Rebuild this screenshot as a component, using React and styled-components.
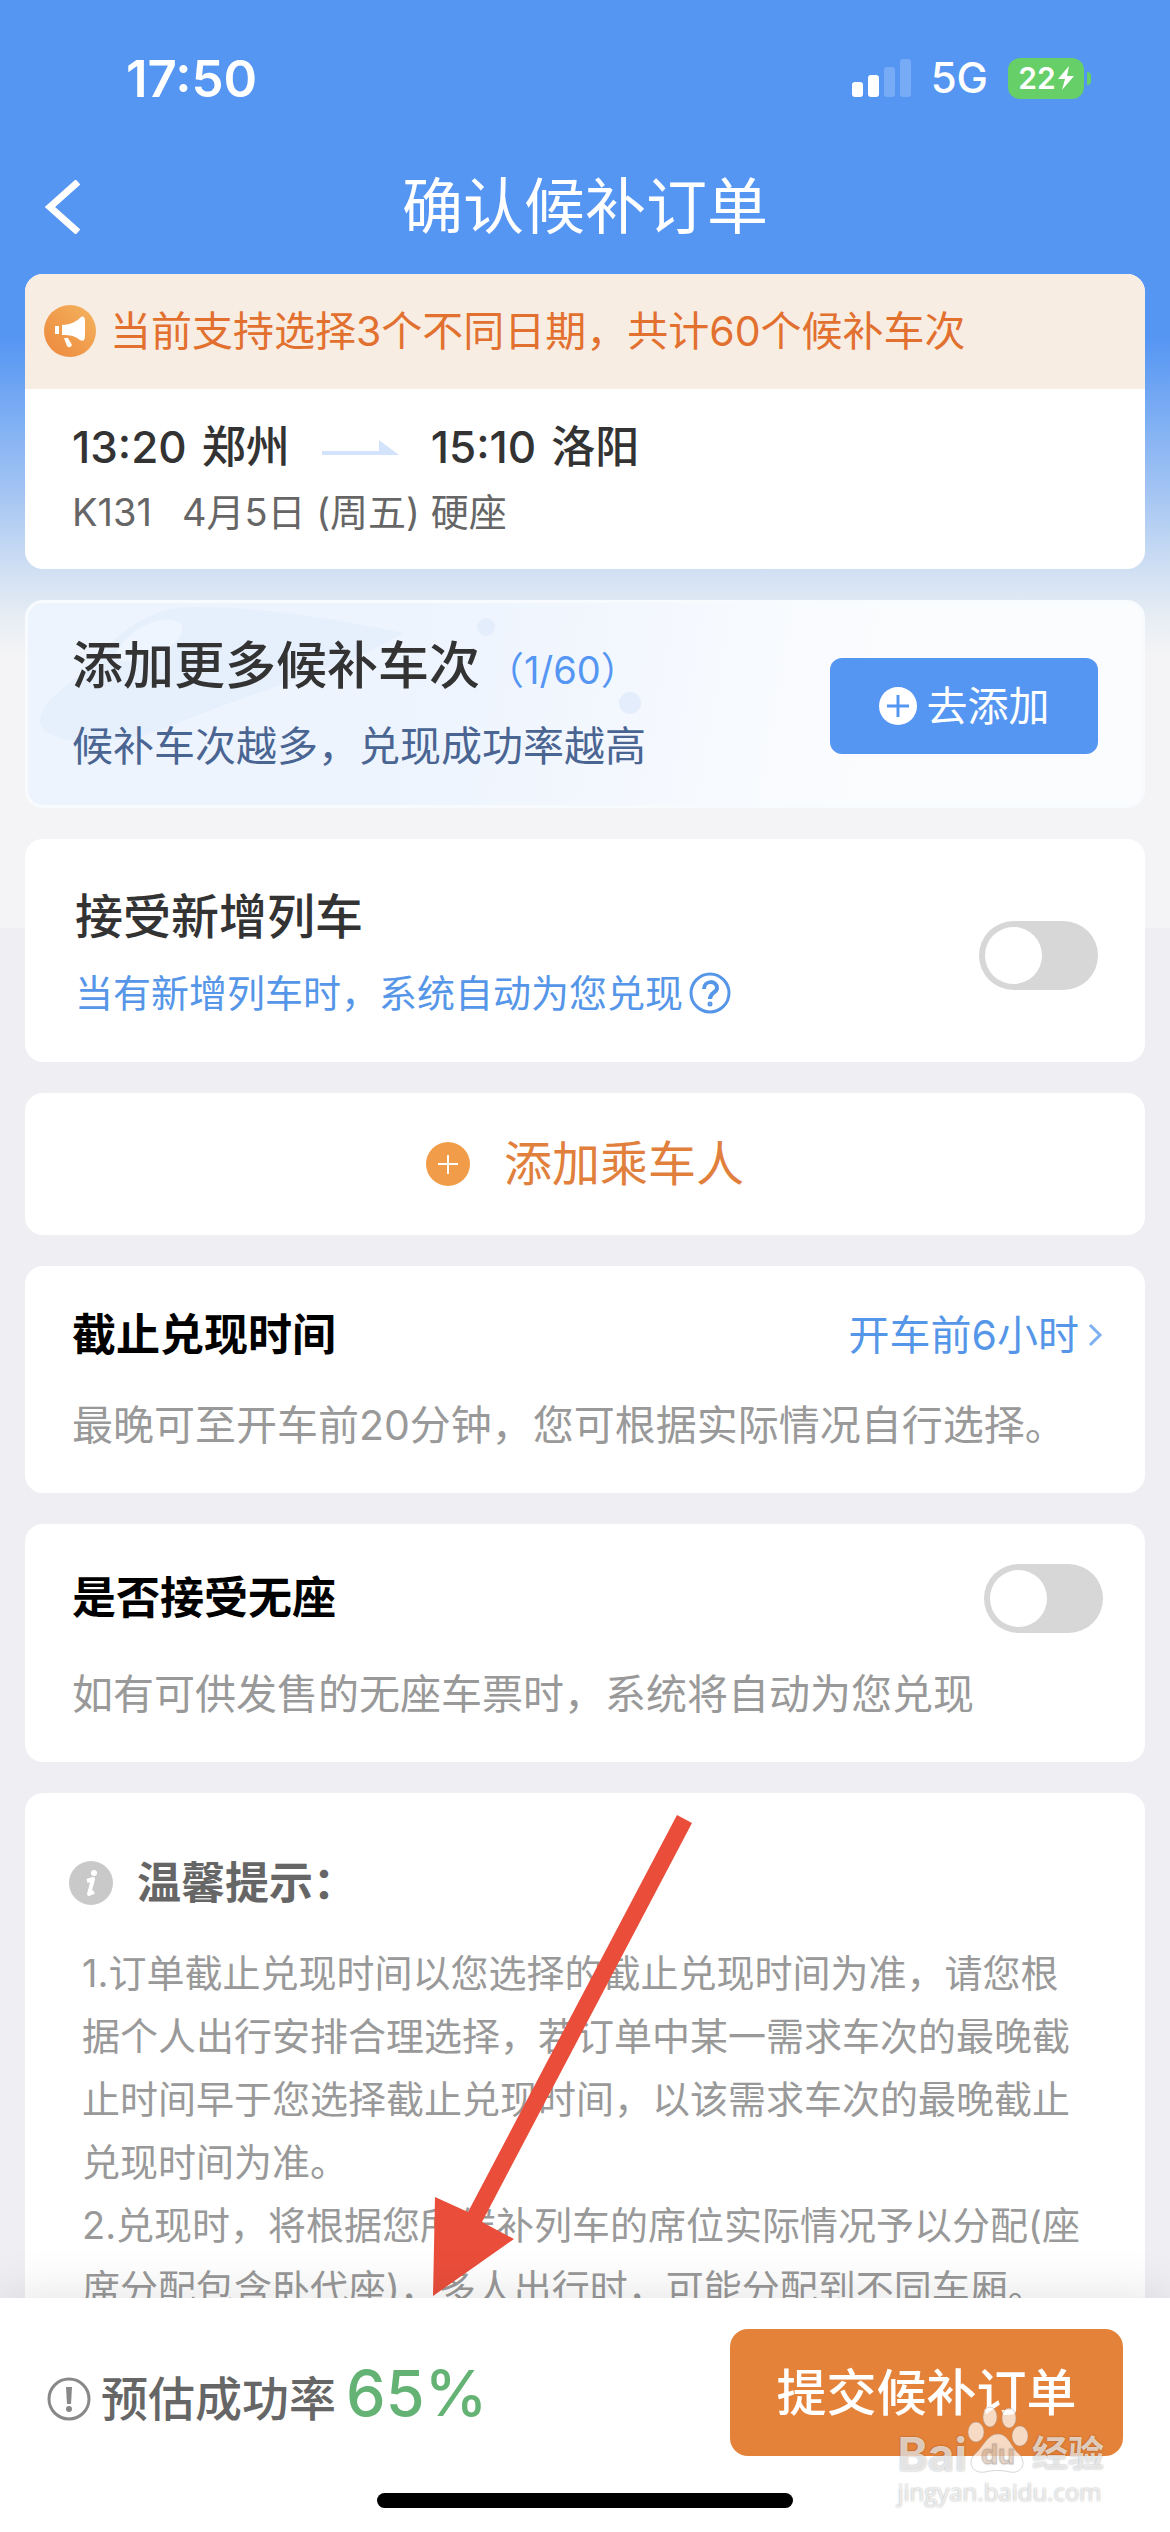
import React, { useState } from 'react';
import styled, { createGlobalStyle } from 'styled-components';

const GlobalStyle = createGlobalStyle`
  * {
    box-sizing: border-box;
  }

  body {
    margin: 0;
    font-family: Inter, "Noto Sans CJK SC", sans-serif;
    line-height: 1;
    color: #333;
  }

  h1, h2, p {
    margin: 0;
    font-weight: 400;
  }

  button {
    font-family: inherit;
    line-height: inherit;
    border: none;
    padding: 0;
    background: none;
    cursor: pointer;
  }

  svg {
    display: block;
    flex-shrink: 0;
  }
`;

const Page = styled.div`
  display: flex;
  flex-direction: column;
  height: 100vh;
  background: #eeeef3 linear-gradient(
    #5696f3 340px, #a7c7f3 500px, #cfdff3 568px, #e8eef4 620px, #f4f4f6 655px
  ) no-repeat top / 100% 928px;
`;

const StatusBar = styled.div`
  display: flex;
  align-items: center;
  justify-content: space-between;
  height: 156px;
  flex-shrink: 0;
  padding: 0 79px 0 126px;
  color: #fff;
`;

const Clock = styled.span`
  font-size: 51px;
  font-weight: 600;
`;

const StatusIcons = styled.div`
  display: flex;
  align-items: center;
  gap: 20px;
  font-size: 42px;
  font-weight: 500;
`;

const Battery = styled.div`
  position: relative;
  display: flex;
  align-items: center;
  justify-content: center;
  gap: 2px;
  width: 76px;
  height: 41px;
  margin-right: 7px;
  border-radius: 12px;
  background: #66cf67;
  font-size: 30px;
  font-weight: 600;

  &::after {
    content: '';
    position: absolute;
    right: -7px;
    width: 4px;
    height: 13px;
    border-radius: 0 4px 4px 0;
    background: #66cf67;
  }
`;

const NavBar = styled.header`
  display: grid;
  grid-template-columns: 80px 1fr 80px;
  align-items: center;
  height: 102px;
  flex-shrink: 0;
  margin-bottom: 16px;
  padding: 0 44px;
  color: #fff;
`;

const NavTitle = styled.h1`
  font-size: 61px;
  text-align: center;
`;

const Content = styled.main`
  position: relative;
  display: flex;
  flex-direction: column;
  gap: 31px;
  flex: 1;
  min-height: 0;
  overflow: hidden;
  padding: 0 25px;
`;

const Card = styled.section`
  position: relative;
  flex-shrink: 0;
  overflow: hidden;
  border-radius: 18px;
  background: #fff;
  padding: ${props => props.$pad || '0'};
`;

const Notice = styled.div`
  display: flex;
  align-items: center;
  gap: 13px;
  height: 115px;
  padding-left: 19px;
  background: #f8ede3;
  color: #e2702f;
  font-size: 41px;
`;

const Trip = styled.div`
  padding: 26px 47px 24px;
`;

const Route = styled.div`
  display: flex;
  align-items: center;
  gap: 32px;
  font-size: 44px;
  font-weight: 500;
  line-height: 65px;
`;

const Stop = styled.span`
  display: flex;
  gap: 15px;
`;

const TrainInfo = styled.p`
  display: flex;
  gap: 30px;
  font-size: 38px;
  line-height: 65px;
  color: #666;
`;

const SplitRow = styled.div`
  position: relative;
  display: flex;
  align-items: center;
  justify-content: space-between;
`;

const CardTitle = styled.h2`
  font-size: ${props => props.$size || '44px'};
  font-weight: ${props => props.$weight || 500};
  line-height: ${props => props.$line};
  color: ${props => props.$color || '#333'};
`;

const CardText = styled.p`
  display: flex;
  align-items: center;
  gap: 6px;
  font-size: ${props => props.$size || '41px'};
  line-height: ${props => props.$line};
  color: ${props => props.$color || '#999'};
`;

const Count = styled.span`
  margin-left: 6px;
  font-size: 38px;
  font-weight: 400;
  line-height: 1;
  color: #5696f3;
`;

const MoreCard = styled(Card)`
  background: linear-gradient(100deg, #edf4fe 35%, #fbfcfe 75%);
  border: 3px solid #f8fbfe;
`;

const TrainArt = styled.svg`
  position: absolute;
  left: 0;
  top: 0;
`;

const AddButton = styled.button`
  display: flex;
  align-items: center;
  justify-content: center;
  gap: 10px;
  width: 268px;
  height: 96px;
  border-radius: 12px;
  background: #5696f3;
  color: #fff;
  font-size: 41px;
`;

const PassengerButton = styled.button`
  display: flex;
  align-items: center;
  justify-content: center;
  gap: 34px;
  width: 100%;
  height: 142px;
  color: #e1803d;
  font-size: 48px;
`;

const LinkButton = styled.button`
  display: flex;
  align-items: center;
  gap: 9px;
  color: #5696e8;
  font-size: 41px;
`;

const Toggle = styled.input`
  appearance: none;
  width: 119px;
  height: 69px;
  margin: 0;
  padding: 6px;
  border-radius: 35px;
  background: ${props => (props.checked ? '#5696f3' : '#d7d7d7')};
  cursor: pointer;

  &::before {
    content: '';
    display: block;
    width: 57px;
    height: 57px;
    margin-left: ${props => (props.checked ? '50px' : '0')};
    border-radius: 50%;
    background: #fff;
  }
`;

const TipsHead = styled.div`
  display: flex;
  align-items: center;
  gap: 24px;
  padding-left: 44px;
  margin-bottom: 20px;
`;

const TipsText = styled.p`
  padding: 0 58px 0 57px;
  font-size: 38px;
  line-height: 63px;
  color: #999;
`;

const Pointer = styled.svg`
  position: absolute;
  left: 408px;
  top: 22px;
`;

const Footer = styled.footer`
  position: relative;
  flex-shrink: 0;
  padding: 31px 47px 24px;
  background: #fff;
  box-shadow: 0 0 50px rgba(0, 0, 0, 0.12);
`;

const Rate = styled.div`
  display: flex;
  align-items: center;
  gap: 10px;
  padding-top: 12px;
  font-size: 47px;
  font-weight: 500;
  color: #666;
`;

const Percent = styled.strong`
  font-size: 63px;
  font-weight: 500;
  line-height: 80px;
  margin-bottom: 12px;
  color: #64b374;
`;

const SubmitButton = styled.button`
  width: 393px;
  height: 127px;
  border-radius: 18px;
  background: #e58239;
  color: #fff;
  font-size: 50px;
  font-weight: 500;
`;

const HomeBar = styled.div`
  width: 416px;
  height: 15px;
  margin: 37px auto 0;
  border-radius: 8px;
  background: #000;
`;

const Watermark = styled.div`
  position: absolute;
  right: 66px;
  bottom: 22px;
  display: flex;
  flex-direction: column;
  color: rgba(255, 255, 255, 0.7);
  text-shadow: 0 0 2px rgba(0, 0, 0, 0.35);
  pointer-events: none;
`;

const WatermarkLogo = styled.div`
  display: flex;
  align-items: flex-end;
  font-size: 46px;
  font-weight: 700;
  line-height: 40px;
`;

const WatermarkCn = styled.span`
  margin-left: 3px;
  font-size: 36px;
`;

const WatermarkUrl = styled.span`
  font-family: "Open Sans", sans-serif;
  font-size: 24px;
  line-height: 36px;
`;

const SignalIcon = () => (
  <svg width="59" height="38" viewBox="0 0 59 38" fill="#fff">
    <rect x="0" y="23" width="11" height="15" rx="3" />
    <rect x="16" y="16" width="11" height="22" rx="3" />
    <rect x="32" y="8" width="11" height="30" rx="3" opacity="0.2" />
    <rect x="48" y="0" width="11" height="38" rx="3" opacity="0.2" />
  </svg>
);

const BoltIcon = () => (
  <svg width="16" height="24" viewBox="0 0 16 24" fill="#fff">
    <path d="M11 0 L0 13 H7 L4 24 L16 10 H9 Z" />
  </svg>
);

const BackIcon = () => (
  <svg width="38" height="54" viewBox="0 0 38 54" fill="none" stroke="#fff" strokeWidth="7">
    <path d="M34 2 L6 27 L34 52" />
  </svg>
);

const HornIcon = () => (
  <svg width="53" height="53" viewBox="0 0 53 53">
    <defs>
      <linearGradient id="horn" x1="1" y1="0" x2="0" y2="1">
        <stop offset="0" stopColor="#f5b45f" />
        <stop offset="1" stopColor="#ec873c" />
      </linearGradient>
    </defs>
    <circle cx="26" cy="26" r="26" fill="url(#horn)" />
    <path d="M18 20 C27 20 33 16 37 12 Q41 10 41 17 V30 Q41 38 36 35 C31 31 27 30 18 30 Z" fill="#fff" />
    <path d="M11 21 H15 V29 H11 Z M20 33 L24 33 L28 40 Q26 44 23 41 Z" fill="#fff" />
  </svg>
);

const RouteArrow = () => (
  <svg width="77" height="16" viewBox="0 0 77 16" fill="#d3e3fb">
    <path d="M0 11 H57 V0 L77 15 H0 Z" />
  </svg>
);

const AddIcon = () => (
  <svg width="38" height="38" viewBox="0 0 38 38">
    <circle cx="19" cy="19" r="19" fill="#fff" />
    <path d="M19 8 V30 M8 19 H30" stroke="#5696f3" strokeWidth="3" />
  </svg>
);

const PassengerIcon = () => (
  <svg width="44" height="44" viewBox="0 0 44 44">
    <circle cx="22" cy="22" r="22" fill="#f09c49" />
    <path d="M22 13 V32 M12 22 H32" stroke="#fff" strokeWidth="2" />
  </svg>
);

const HelpIcon = () => (
  <svg width="42" height="42" viewBox="0 0 42 42" fill="none" stroke="#5696e8" strokeWidth="3">
    <circle cx="21" cy="21" r="19" />
    <path d="M15 17 C15 8 28 8 28 16 C28 21 21 20 21 27" strokeWidth="4" />
    <circle cx="21" cy="32" r="1" strokeWidth="3" />
  </svg>
);

const ChevronIcon = () => (
  <svg width="15" height="24" viewBox="0 0 15 24" fill="none" stroke="#7fb0ef" strokeWidth="3">
    <path d="M2 2 L12 12 L2 22" />
  </svg>
);

const InfoIcon = () => (
  <svg width="44" height="44" viewBox="0 0 44 44">
    <circle cx="22" cy="22" r="22" fill="#c9c9c9" />
    <circle cx="25" cy="12" r="3" fill="#fff" />
    <path d="M18 20 L24 18 L20 33 L25 31" fill="none" stroke="#fff" strokeWidth="4" strokeLinejoin="round" />
  </svg>
);

const AlertIcon = () => (
  <svg width="44" height="44" viewBox="0 0 44 44">
    <circle cx="22" cy="22" r="20" fill="none" stroke="#888" strokeWidth="3" />
    <path d="M19 10 H25 L24 27 H20 Z" fill="#888" />
    <circle cx="22" cy="32" r="3" fill="#888" />
  </svg>
);

const PawIcon = () => (
  <svg width="62" height="68" viewBox="0 0 62 68" fill="#fff" fillOpacity="0.7" stroke="#999" strokeOpacity="0.4">
    <ellipse cx="9" cy="26" rx="8" ry="10" />
    <ellipse cx="23" cy="11" rx="7" ry="10" />
    <ellipse cx="42" cy="12" rx="7" ry="10" />
    <ellipse cx="53" cy="30" rx="8" ry="10" />
    <path d="M31 28 C42 28 44 42 53 49 C60 58 54 68 43 66 C35 64 26 64 18 66 C6 68 0 57 7 49 C16 42 20 28 31 28 Z" />
    <text x="14" y="58" fontFamily="Inter" fontSize="27" fill="#e58239" fillOpacity="0.2">du</text>
  </svg>
);

function App() {
  const [acceptNew, setAcceptNew] = useState(false);
  const [acceptStanding, setAcceptStanding] = useState(false);

  return (
    <Page>
      <GlobalStyle />
      <StatusBar>
        <Clock>17:50</Clock>
        <StatusIcons>
          <SignalIcon />
          <span>5G</span>
          <Battery>22<BoltIcon /></Battery>
        </StatusIcons>
      </StatusBar>
      <NavBar>
        <button type="button" aria-label="返回"><BackIcon /></button>
        <NavTitle>确认候补订单</NavTitle>
      </NavBar>

      <Content>
        <Card>
          <Notice>
            <HornIcon />
            <span>当前支持选择3个不同日期，共计60个候补车次</span>
          </Notice>
          <Trip>
            <Route>
              <Stop><span>13:20</span><span>郑州</span></Stop>
              <RouteArrow />
              <Stop><span>15:10</span><span>洛阳</span></Stop>
            </Route>
            <TrainInfo>
              <span>K131</span>
              <span>4月5日 (周五) 硬座</span>
            </TrainInfo>
          </Trip>
        </Card>

        <MoreCard $pad="23px 44px 19px">
          <TrainArt width="640" height="202" viewBox="0 0 640 202">
            <path d="M12 118 C14 96 40 84 60 64 C90 30 120 4 165 4 C230 4 300 14 375 30 C330 60 220 90 130 128 C70 146 14 140 12 118 Z" fill="#e6effc" />
            <path d="M88 50 C104 22 140 8 154 22 C160 40 120 60 92 58 Z" fill="#eff5fe" />
            <circle cx="458" cy="24" r="9" fill="#e4edfb" />
            <circle cx="602" cy="100" r="11" fill="#e4edfb" />
          </TrainArt>
          <SplitRow>
            <div>
              <CardTitle $size="51px" $line="80px">
                添加更多候补车次<Count>（1/60）</Count>
              </CardTitle>
              <CardText $line="80px" $color="#4a6592">候补车次越多，兑现成功率越高</CardText>
            </div>
            <AddButton type="button">
              <AddIcon />
              去添加
            </AddButton>
          </SplitRow>
        </MoreCard>

        <Card $pad="40px 47px 31px 50px">
          <SplitRow>
            <label htmlFor="accept-new">
              <CardTitle $size="48px" $line="76px">接受新增列车</CardTitle>
              <CardText $size="38px" $line="76px" $color="#5696e8">
                当有新增列车时，系统自动为您兑现
                <HelpIcon />
              </CardText>
            </label>
            <Toggle
              id="accept-new"
              type="checkbox"
              checked={acceptNew}
              onChange={e => setAcceptNew(e.target.checked)}
            />
          </SplitRow>
        </Card>

        <Card>
          <PassengerButton type="button">
            <PassengerIcon />
            添加乘车人
          </PassengerButton>
        </Card>

        <Card $pad="24px 42px 23px 47px">
          <SplitRow>
            <CardTitle $line="90px" $weight={700} $color="#000">截止兑现时间</CardTitle>
            <LinkButton type="button">
              开车前6小时
              <ChevronIcon />
            </LinkButton>
          </SplitRow>
          <CardText $line="90px">最晚可至开车前20分钟，您可根据实际情况自行选择。</CardText>
        </Card>

        <Card $pad="26px 42px 20px 47px">
          <SplitRow>
            <CardTitle as="label" htmlFor="accept-standing" $line="96px" $weight={700} $color="#000">
              是否接受无座
            </CardTitle>
            <Toggle
              id="accept-standing"
              type="checkbox"
              checked={acceptStanding}
              onChange={e => setAcceptStanding(e.target.checked)}
            />
          </SplitRow>
          <CardText $line="96px">如有可供发售的无座车票时，系统将自动为您兑现</CardText>
        </Card>

        <Card $pad="51px 0">
          <TipsHead>
            <InfoIcon />
            <CardTitle $line="78px" $weight={700} $color="#666">温馨提示：</CardTitle>
          </TipsHead>
          <TipsText>
            1.订单截止兑现时间以您选择的截止兑现时间为准，请您根据个人出行安排合理选择，若订单中某一需求车次的最晚截止时间早于您选择截止兑现时间，以该需求车次的最晚截止兑现时间为准。
          </TipsText>
          <TipsText>
            2.兑现时，将根据您所候补列车的席位实际情况予以分配(座席分配包含卧代座)，多人出行时，可能分配到不同车厢。
          </TipsText>
          <Pointer width="260" height="482" viewBox="0 0 260 482" fill="#ea4e3b">
            <path d="M244 0 L259 8 L49 407 L81 424 L0 481 L2 382 L35 397 Z" />
          </Pointer>
        </Card>
      </Content>

      <Footer>
        <SplitRow>
          <Rate>
            <AlertIcon />
            <span>预估成功率</span>
            <Percent>65%</Percent>
          </Rate>
          <SubmitButton type="button">提交候补订单</SubmitButton>
        </SplitRow>
        <HomeBar />
        <Watermark>
          <WatermarkLogo>
            <span>Bai</span>
            <PawIcon />
            <WatermarkCn>经验</WatermarkCn>
          </WatermarkLogo>
          <WatermarkUrl>jingyan.baidu.com</WatermarkUrl>
        </Watermark>
      </Footer>
    </Page>
  );
}

export default App;
